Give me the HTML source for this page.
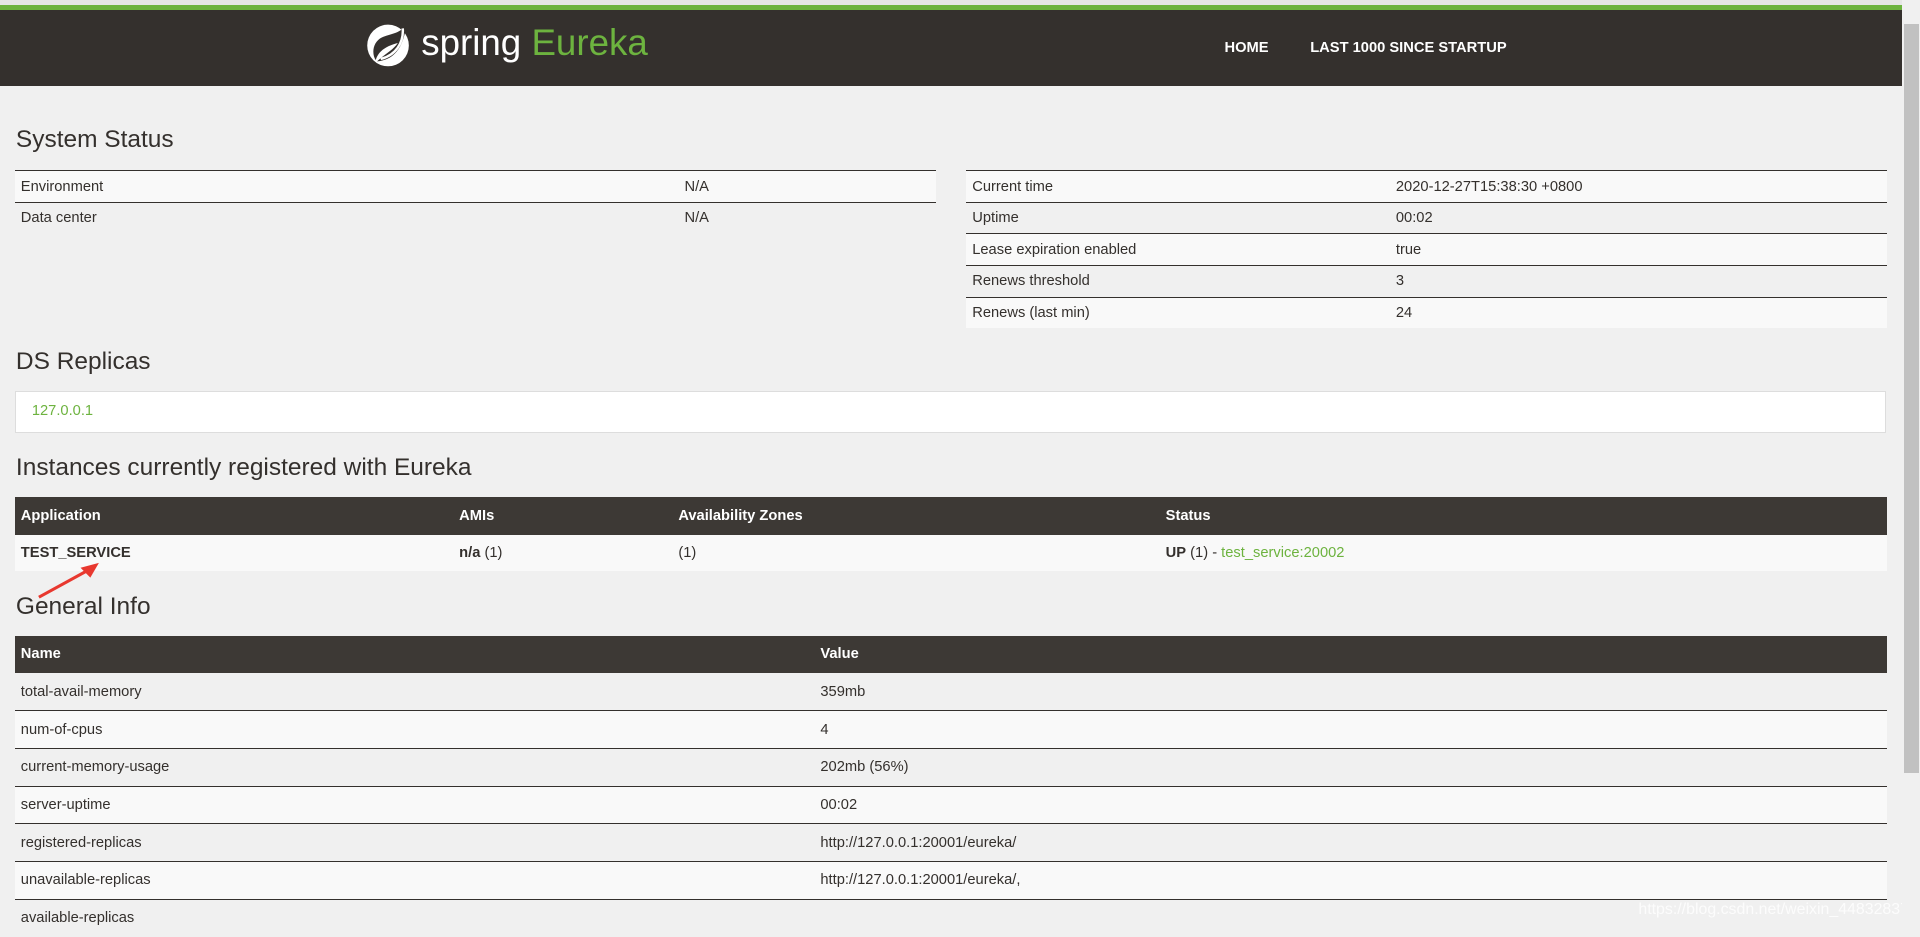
<!DOCTYPE html>
<html><head><meta charset="utf-8"><style>
html{zoom:1.22449}
body{margin:0;width:1568px;height:758px;overflow:hidden;background:#f0f0f0;font-family:"Liberation Sans",sans-serif;color:#34302d;position:relative;font-size:12px}
.abs{position:absolute}
.top{left:0;top:0;width:1553px;height:4px;background:#e6e6e6}
.green{left:0;top:4px;width:1553px;height:4px;background:#6db33f}
.hdr{left:0;top:8px;width:1553px;height:62px;background:#34302d}
.nav{color:#fff;font-weight:bold;font-size:12px;top:33px}
h2{position:absolute;margin:0;font-weight:normal;font-size:20px;left:13px;color:#34302d}
table{position:absolute;border-collapse:collapse;table-layout:fixed}
td,th{padding:0 0 0 5px;text-align:left;height:25px}
.st tr{border-top:1px solid #34302d}
.st tr:nth-child(odd){background:#f9f9f9}
.dk th{background:#3d3935;color:#fff;font-weight:bold;font-size:12px;height:31px}
.gi td{height:30px;border-top:1px solid #34302d}
.gi tr:nth-child(odd) td{background:#f9f9f9}
.gi tr:nth-child(2) td{border-top:none}
a{color:#6db33f;text-decoration:none}
</style></head><body>
<div class="abs top"></div><div class="abs green"></div><div class="abs hdr"></div>
<svg class="abs" style="left:299px;top:17px" width="38" height="38" viewBox="0 0 38 38">
<circle cx="18" cy="20" r="17" fill="#fff"/>
<path d="M33 3 C28 10 22 10 14 13 C6 16 4 26 8 32 C10 24 18 20 26 18 C22 24 14 28 9 33 C20 32 30 26 33 3Z" fill="#34302d"/>
<path d="M30 6 C31 18 24 28 12 31" stroke="#fff" stroke-width="2" fill="none"/>
</svg>
<div class="abs" style="left:344px;top:18px;font-size:30px;color:#fff">spring <span style="color:#6db33f">Eureka</span></div>
<div class="abs nav" style="left:1000px">HOME</div>
<div class="abs nav" style="left:1070px">LAST 1000 SINCE STARTUP</div>

<h2 style="top:103px">System Status</h2>
<table class="st" style="left:12px;top:139px;width:752px">
<col style="width:542px"><col>
<tr><td>Environment</td><td>N/A</td></tr>
<tr style="background:#f0f0f0"><td>Data center</td><td>N/A</td></tr>
</table>
<table class="st" style="left:789px;top:139px;width:752px">
<col style="width:346px"><col>
<tr><td>Current time</td><td>2020-12-27T15:38:30 +0800</td></tr>
<tr><td>Uptime</td><td>00:02</td></tr>
<tr><td>Lease expiration enabled</td><td>true</td></tr>
<tr><td>Renews threshold</td><td>3</td></tr>
<tr><td>Renews (last min)</td><td>24</td></tr>
</table>

<h2 style="top:284px">DS Replicas</h2>
<div class="abs" style="left:12px;top:319px;width:1527px;height:33px;background:#fff;border:1px solid #ddd"></div>
<a class="abs" style="left:26px;top:329px">127.0.0.1</a>

<h2 style="top:371px">Instances currently registered with Eureka</h2>
<table class="dk" style="left:12px;top:406px;width:1529px">
<col style="width:358px"><col style="width:179px"><col style="width:398px"><col>
<tr><th>Application</th><th>AMIs</th><th>Availability Zones</th><th>Status</th></tr>
<tr style="background:#f9f9f9"><td style="height:29px"><b>TEST_SERVICE</b></td><td><b>n/a</b> (1)</td><td>(1)</td><td><b>UP</b> (1) - <a>test_service:20002</a></td></tr>
</table>
<svg class="abs" style="left:28px;top:456px" width="60" height="36"><line x1="4" y1="32" x2="46" y2="9" stroke="#e8382f" stroke-width="2.5"/><polygon points="53,4 38,8 46,16" fill="#e8382f"/></svg>

<h2 style="top:484px">General Info</h2>
<table class="dk gi" style="left:12px;top:519px;width:1529px">
<col style="width:653px"><col>
<tr><th>Name</th><th>Value</th></tr>
<tr><td>total-avail-memory</td><td>359mb</td></tr>
<tr><td>num-of-cpus</td><td>4</td></tr>
<tr><td>current-memory-usage</td><td>202mb (56%)</td></tr>
<tr><td>server-uptime</td><td>00:02</td></tr>
<tr><td>registered-replicas</td><td>http://127.0.0.1:20001/eureka/</td></tr>
<tr><td>unavailable-replicas</td><td>http://127.0.0.1:20001/eureka/,</td></tr>
<tr><td>available-replicas</td><td></td></tr>
</table>
<div class="abs" style="left:1338px;top:736px;color:#fff;font-size:13px;opacity:.8">https://blog.csdn.net/weixin_44832837</div>
<div class="abs" style="left:1553px;top:0;width:15px;height:758px;background:#f0f0f0"></div>
<div class="abs" style="left:1555px;top:20px;width:12px;height:611px;background:#c1c1c1"></div>
</body></html>
